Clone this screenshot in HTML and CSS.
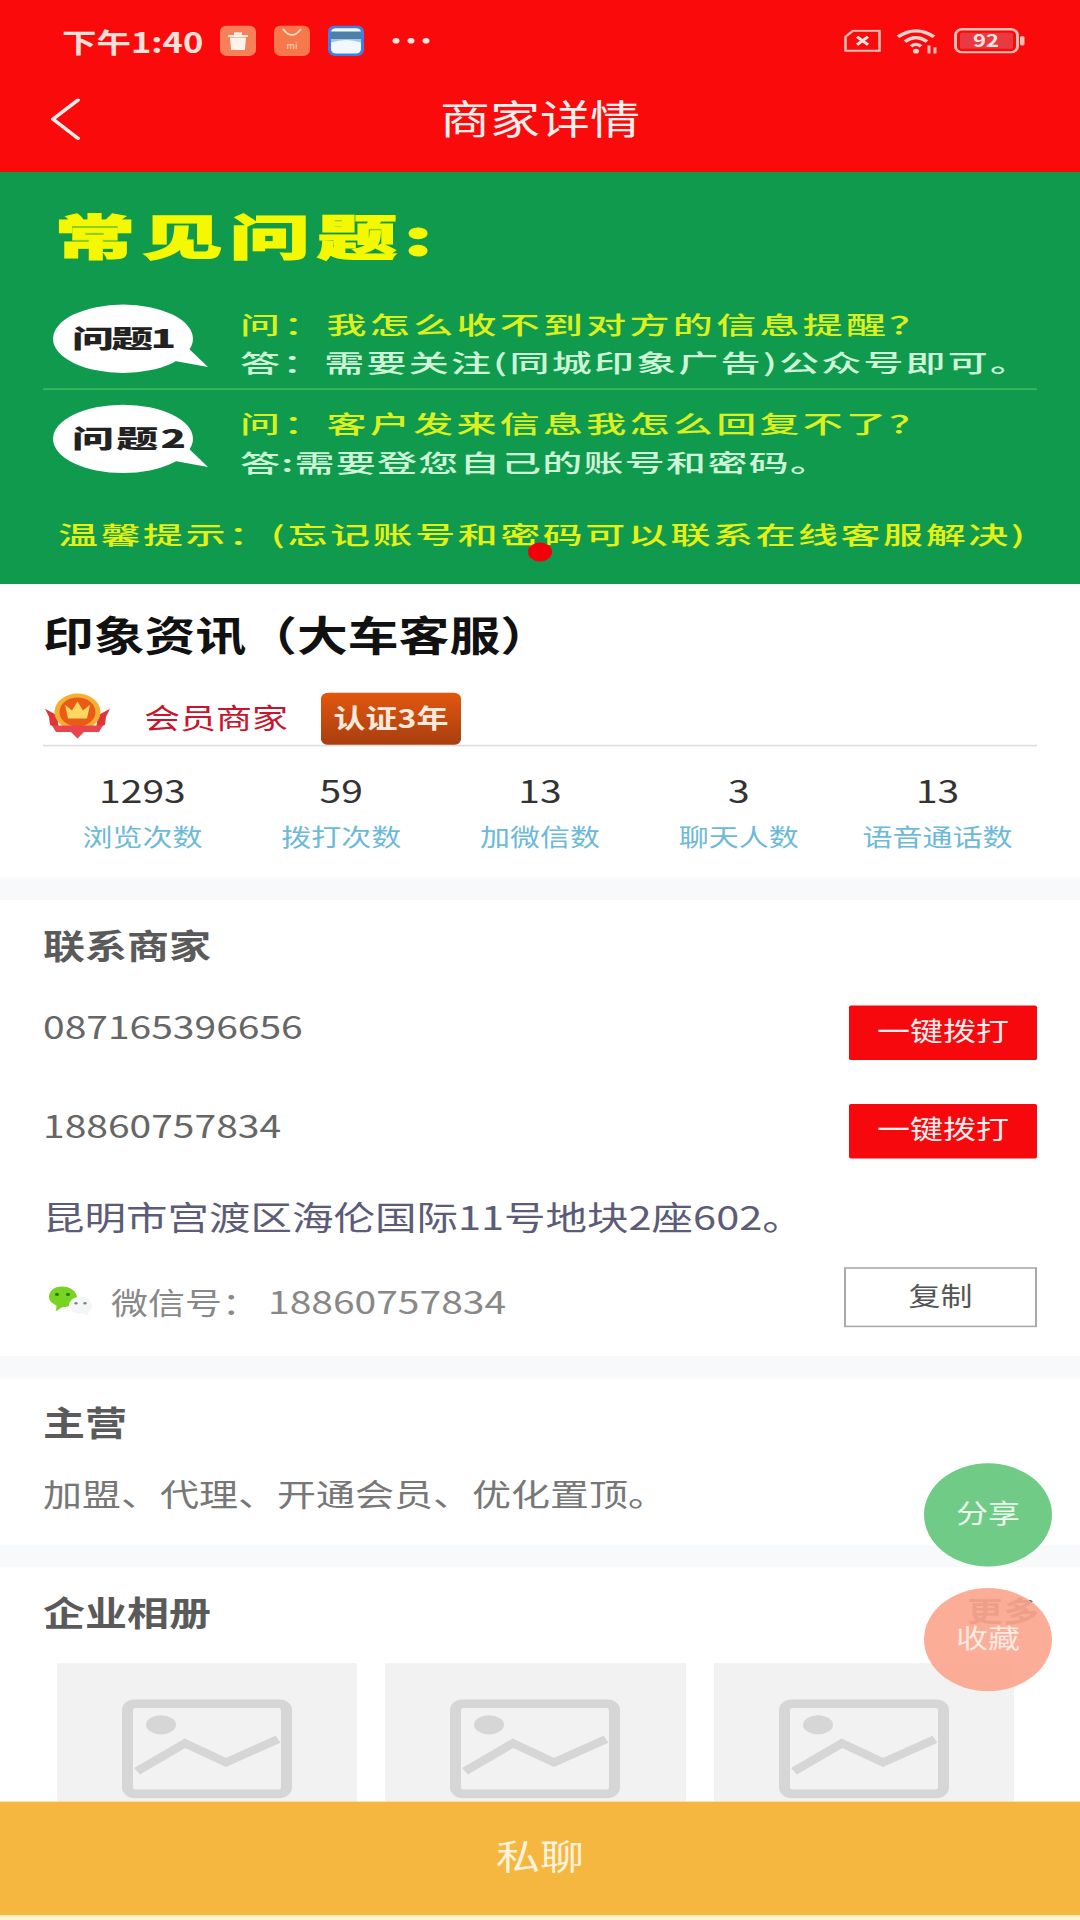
FILE: index.html
```html
<!DOCTYPE html>
<html lang="zh-CN">
<head>
<meta charset="utf-8">
<title>商家详情</title>
<link rel="stylesheet" href="styles.css">
</head>
<body>
<div class="page">
  <header class="header">
    <div class="status">
      <span class="time">下午1:40</span>
      <svg class="app-icon first" viewBox="0 0 36 36" preserveAspectRatio="none"><rect width="36" height="36" rx="7" fill="#f5805a"/><path d="M10 14 H26 L25 28 Q25 29 24 29 H12 Q11 29 11 28Z" fill="#fff3ea"/><rect x="8" y="11" width="20" height="2.500" rx="1" fill="#fff3ea"/><rect x="14" y="8" width="8" height="3" fill="#fff3ea"/></svg>
      <svg class="app-icon" viewBox="0 0 36 36" preserveAspectRatio="none"><rect width="36" height="36" rx="7" fill="#f7784a"/><path d="M9 4 Q18 18 27 4" fill="none" stroke="#ffd9c4" stroke-width="2"/><text class="mi" x="18" y="28">mi</text></svg>
      <svg class="app-icon" viewBox="0 0 36 36" preserveAspectRatio="none"><rect width="36" height="36" rx="7" fill="#3f80e4"/><rect x="3" y="3" width="30" height="30" rx="5" fill="#f3f8ff"/><rect x="3" y="7" width="30" height="9" fill="#4d7fa8"/><path d="M3 16 H33 L33 20 Q18 14 3 20Z" fill="#9fc8ee"/></svg>
      <svg class="dots" viewBox="0 0 38 8"><circle cx="4" cy="4" r="3.500"/><circle cx="19" cy="4" r="3.500"/><circle cx="34" cy="4" r="3.500"/></svg>
      <span class="status-right">
        <svg class="sim" viewBox="0 0 37 28"><path d="M9 1.500H35.500V26.500H1.500V9Z" fill="none" stroke="#fbbcb4" stroke-width="2.600"/><path d="M13 9 L24 19 M24 9 L13 19" stroke="#fde5e0" stroke-width="3.200"/></svg>
        <svg class="wifi" viewBox="0 0 43 33"><g fill="none" stroke="#fdd5ce" stroke-width="4"><path d="M2 11 Q20 -4 38 11"/><path d="M9 17 Q20 7 31 17"/><path d="M15 23 Q20 18 25 23"/></g><circle cx="20" cy="29" r="3" fill="#fdd5ce"/><path d="M33 22V32M39 24V32" stroke="#fbbcb4" stroke-width="3"/></svg>
        <svg class="battery" viewBox="0 0 71 32"><rect x="1.500" y="1.500" width="62" height="29" rx="7" fill="none" stroke="#fbbcb4" stroke-width="3"/><rect x="6" y="6" width="53" height="20" rx="2" fill="#e83a40"/><rect x="66" y="10" width="4.500" height="12" rx="2" fill="#fbbcb4"/><text class="bat-num" x="32" y="24">92</text></svg>
      </span>
    </div>
    <nav class="nav">
      <svg class="back" viewBox="0 0 30 52"><path d="M28 2 L3 26 L28 50" fill="none" stroke="#fdeeea" stroke-width="4" stroke-linecap="round" stroke-linejoin="round"/></svg>
      <h1 class="nav-title">商家详情</h1>
    </nav>
  </header>

  <main class="main">
    <section class="banner">
      <svg class="banner-art" viewBox="0 0 1080 687" preserveAspectRatio="none">
        <text class="b-title" x="55" y="139" textLength="342">常见问题</text>
        <text class="b-title" x="404" y="139">:</text>

        <ellipse cx="123" cy="278" rx="70" ry="57" fill="#fff"/>
        <path d="M186 290 L208 325 L168 313 Z" fill="#fff"/>
        <text class="b-tag" x="72" y="293" textLength="104">问题1</text>

        <text class="b-q" x="240" y="270">问：我怎么收不到对方的信息提醒？</text>
        <text class="b-a" x="240" y="334" textLength="790">答：需要关注(同城印象广告)公众号即可。</text>

        <rect x="43" y="361" width="994" height="2" fill="#4cc566"/>

        <ellipse cx="123" cy="445" rx="70" ry="57" fill="#fff"/>
        <path d="M186 457 L208 492 L168 480 Z" fill="#fff"/>
        <text class="b-tag" x="72" y="460" textLength="114">问题2</text>

        <text class="b-q" x="240" y="436">问：客户发来信息我怎么回复不了？</text>
        <text class="b-a" x="240" y="501" textLength="590">答:需要登您自己的账号和密码。</text>

        <text class="b-tip" x="58" y="620" textLength="967">温馨提示：(忘记账号和密码可以联系在线客服解决)</text>
      </svg>
      <span class="banner-dot"></span>
    </section>

    <section class="info">
      <h2 class="shop-name">印象资讯（大车客服）</h2>
      <div class="member-row">
        <svg class="crown" viewBox="0 0 67 58">
          <path d="M1 20 L13 28 L15 46 L6 40 L5 30Z" fill="#e0343a"/><path d="M66 20 L54 28 L52 46 L61 40 L62 30Z" fill="#e0343a"/>
          <circle cx="33.500" cy="24" r="23" fill="#f5b030"/><circle cx="33.500" cy="24" r="18" fill="#ea5a18"/>
          <path d="M21 15 L28 22 L33.500 11 L39 22 L46 15 L43 32 H24Z" fill="#fcd860"/>
          <path d="M8 41 H59 L55 49 H40 L33.500 57 L27 49 H12Z" fill="#e8454e"/>
        </svg>
        <span class="member-text">会员商家</span>
        <span class="cert">认证3年</span>
      </div>
      <div class="stats">
        <div class="stat"><b>1293</b><span>浏览次数</span></div>
        <div class="stat"><b>59</b><span>拨打次数</span></div>
        <div class="stat"><b>13</b><span>加微信数</span></div>
        <div class="stat"><b>3</b><span>聊天人数</span></div>
        <div class="stat"><b>13</b><span>语音通话数</span></div>
      </div>
    </section>

    <section class="card contact">
      <h3 class="card-title">联系商家</h3>
      <div class="phone-list">
        <div class="phone-row"><span class="phone">087165396656</span><button class="call">一键拨打</button></div>
        <div class="phone-row"><span class="phone">18860757834</span><button class="call">一键拨打</button></div>
      </div>
      <p class="address">昆明市宫渡区海伦国际11号地块2座602。</p>
      <div class="wechat-row">
        <span class="wechat">
          <svg class="wx" viewBox="0 0 45 38">
            <path d="M14 1 C22 1 29 7 29 15 C29 22 22 27 14 27 L8 32 L8.500 25 C3 22 1 18 1 14 C1 7 6 1 14 1Z" fill="#78d422"/>
            <circle cx="9" cy="11" r="2" fill="#2f7a10"/><circle cx="20" cy="11" r="2" fill="#2f7a10"/>
            <path d="M32 14 C39 14 44 19 44 25 C44 29 42 32 40 33 L41 38 L35 35 C27 36 21 31 21 25 C21 19 26 14 32 14Z" fill="#f4f5f5"/>
            <circle cx="28" cy="22" r="1.600" fill="#7a8888"/><circle cx="37" cy="22" r="1.600" fill="#7a8888"/>
          </svg>
          <span class="wx-label">微信号：</span><span class="wx-id">18860757834</span>
        </span>
        <button class="copy">复制</button>
      </div>
    </section>

    <section class="card business">
      <h3 class="card-title">主营</h3>
      <p class="business-text">加盟、代理、开通会员、优化置顶。</p>
    </section>

    <section class="card album">
      <div class="album-head"><h3 class="card-title">企业相册</h3><span class="more">更多</span></div>
      <div class="tiles">
        <div class="tile"><svg class="ph" viewBox="0 0 170 124"><rect x="5.500" y="5.500" width="159" height="113" rx="8" fill="none" stroke="#d6d6d6" stroke-width="11"/><ellipse cx="39" cy="32" rx="15" ry="12" fill="#d6d6d6"/><path d="M15 90 L63 55 L104 79 L156 50" fill="none" stroke="#d6d6d6" stroke-width="10"/></svg></div>
        <div class="tile"><svg class="ph" viewBox="0 0 170 124"><rect x="5.500" y="5.500" width="159" height="113" rx="8" fill="none" stroke="#d6d6d6" stroke-width="11"/><ellipse cx="39" cy="32" rx="15" ry="12" fill="#d6d6d6"/><path d="M15 90 L63 55 L104 79 L156 50" fill="none" stroke="#d6d6d6" stroke-width="10"/></svg></div>
        <div class="tile"><svg class="ph" viewBox="0 0 170 124"><rect x="5.500" y="5.500" width="159" height="113" rx="8" fill="none" stroke="#d6d6d6" stroke-width="11"/><ellipse cx="39" cy="32" rx="15" ry="12" fill="#d6d6d6"/><path d="M15 90 L63 55 L104 79 L156 50" fill="none" stroke="#d6d6d6" stroke-width="10"/></svg></div>
      </div>
    </section>
  </main>

  <div class="chat-bar">私聊</div>
  <div class="fab fab-share">分享</div>
  <div class="fab fab-fav">收藏</div>
</div>
</body>
</html>
```
FILE: styles.css
```css
* { box-sizing: border-box; margin: 0; padding: 0; }
html, body { width: 1080px; height: 1920px; overflow: hidden; background: #fff; }
body { font-family: "Noto Sans CJK SC", "Noto Sans", sans-serif; }

/* The capture is a 1080x2400 phone screen squeezed to 1920 tall */
.page {
  position: relative;
  width: 1080px;
  height: 2400px;
  margin-bottom: -480px;
  display: flex;
  flex-direction: column;
  overflow: hidden;
  background: #fff;
  transform: scaleY(.8);
  transform-origin: 0 0;
}

/* header */
.header { flex: none; height: 215px; background: #fb0a0c; color: #fff; }
.status { height: 102px; display: flex; align-items: center; padding: 0 55px 0 62px; }
.time { font-size: 34.5px; font-weight: 700; color: #fde0da; }
.app-icon { width: 36px; height: 38px; margin-left: 18px; flex: none; }
.app-icon.first { margin-left: 17px; }
.mi { font-size: 9px; fill: #ffe2d2; text-anchor: middle; }
.dots { width: 38px; height: 8px; margin-left: 28px; fill: #fde6e0; }
.status-right { margin-left: auto; display: flex; align-items: center; gap: 15px; }
.sim { width: 37px; height: 28px; }
.wifi { width: 43px; height: 33px; }
.battery { width: 71px; height: 32px; }
.bat-num { font-size: 22px; font-weight: 700; fill: #fde6e0; text-anchor: middle; }
.nav { height: 94px; position: relative; display: flex; align-items: center; justify-content: center; }
.back { position: absolute; left: 50px; top: 21px; width: 30px; height: 52px; }
.nav-title { font-size: 50px; font-weight: 400; line-height: 88px; padding-bottom: 6px; color: #fdf0ec; }

/* banner */
.main { flex: 1; min-height: 0; overflow: hidden; }
.banner { position: relative; height: 515px; background: #0f9a4e; }
.banner-art { display: block; width: 1080px; height: 515px; }
.banner-art text { font-family: "Noto Sans CJK SC", "Noto Sans", sans-serif; }
.b-title { font-size: 80px; font-weight: 900; fill: #f4f800; stroke: #f4f800; stroke-width: 2px; }
.b-tag { font-size: 42px; font-weight: 900; fill: #222; }
.b-q { font-size: 40px; font-weight: 500; letter-spacing: 3.3px; fill: #dcf01e; }
.b-a { font-size: 40px; font-weight: 500; fill: #cdf4d6; }
.b-tip { font-size: 40px; font-weight: 500; fill: #e6f014; }
.banner-dot { position: absolute; left: 528px; top: 463px; width: 24px; height: 24px; border-radius: 50%; background: #f40008; }

/* shop info */
.info { padding: 22px 43px 24px; }
.shop-name { font-size: 50.8px; font-weight: 700; line-height: 80px; color: #111; }
.member-row { display: flex; align-items: center; height: 67px; margin-top: 34px; border-bottom: 2px solid #dedede; }
.crown { width: 67px; height: 58px; margin-left: 1px; margin-top: -8px; }
.member-text { margin-left: 33px; font-size: 36px; color: #c8142c; padding-bottom: 8px; }
.cert {
  margin-left: 33px;
  width: 140px;
  height: 65px;
  border-radius: 7px;
  background: linear-gradient(#e2570f, #a83e10);
  color: #fbeadb;
  font-size: 32px;
  font-weight: 700;
  line-height: 60px;
  text-align: center;
}
.stats { display: grid; grid-template-columns: repeat(5, 1fr); padding-top: 26px; }
.stat { display: flex; flex-direction: column; align-items: center; }
.stat b { font-size: 39px; font-weight: 400; line-height: 56px; color: #333; }
.stat span { font-size: 30px; line-height: 56px; margin-top: 2px; color: #6db9da; }

/* cards */
.card { padding: 0 43px; border-top: 28px solid #f8f9fa; }
.card-title { font-size: 42px; font-weight: 700; line-height: 60px; color: #5a5a5a; }

.contact { padding-top: 26px; }
.phone-list { display: flex; flex-direction: column; gap: 55px; margin-top: 46px; }
.phone-row { display: flex; justify-content: space-between; align-items: flex-start; }
.phone { font-size: 39px; line-height: 50px; color: #666; }
.call {
  width: 188px;
  height: 68px;
  padding-bottom: 8px;
  border: 0;
  border-radius: 2px;
  background: #f7080d;
  color: #fbeeee;
  font: 400 33px "Noto Sans CJK SC", sans-serif;
}
.address { margin-top: 42px; font-size: 41.5px; line-height: 60px; color: #5c5c78; }
.wechat-row { display: flex; justify-content: space-between; align-items: flex-start; margin-top: 34px; padding-bottom: 33px; }
.wechat { display: flex; align-items: center; height: 72px; margin-top: 6px; }
.wx { width: 45px; height: 38px; margin-left: 5px; }
.wx-label { margin-left: 18px; font-size: 37px; color: #888; width: 157px; white-space: nowrap; }
.wx-id { font-size: 39px; color: #888; }
.copy {
  width: 193px;
  height: 75px;
  border: 2px solid #aaa;
  background: #fff;
  color: #555;
  font: 400 32px "Noto Sans CJK SC", sans-serif;
  padding-bottom: 6px;
}

.business { padding-top: 24px; padding-bottom: 35px; }
.business-text { margin-top: 29px; font-size: 39px; line-height: 60px; color: #777; }

.album { padding-top: 25px; }
.album-head { display: flex; justify-content: space-between; align-items: center; height: 60px; }
.more { font-size: 36px; font-weight: 700; color: #555; margin-top: -7px; margin-right: -2px; }
.tiles { display: flex; gap: 28px; margin: 35px 23px 0 14px; }
.tile { flex: 1; height: 300px; background: #f2f2f2; display: flex; justify-content: center; padding-top: 45px; }
.ph { width: 170px; height: 124px; }

/* bottom action */
.chat-bar {
  flex: none;
  height: 148px;
  background: #f5b740;
  border-bottom: 6px solid #fff6cf;
  color: #fdf3dc;
  font-size: 44px;
  line-height: 134px;
  text-align: center;
}

/* floating actions */
.fab {
  position: absolute;
  left: 924px;
  width: 128px;
  height: 129px;
  border-radius: 50%;
  font-size: 32px;
  line-height: 122px;
  text-align: center;
}
.fab-share { top: 1829px; background: #6fcb85; color: #ecf9ee; }
.fab-fav { top: 1985px; background: rgba(251, 166, 143, .92); color: #fcebe2; }
```
